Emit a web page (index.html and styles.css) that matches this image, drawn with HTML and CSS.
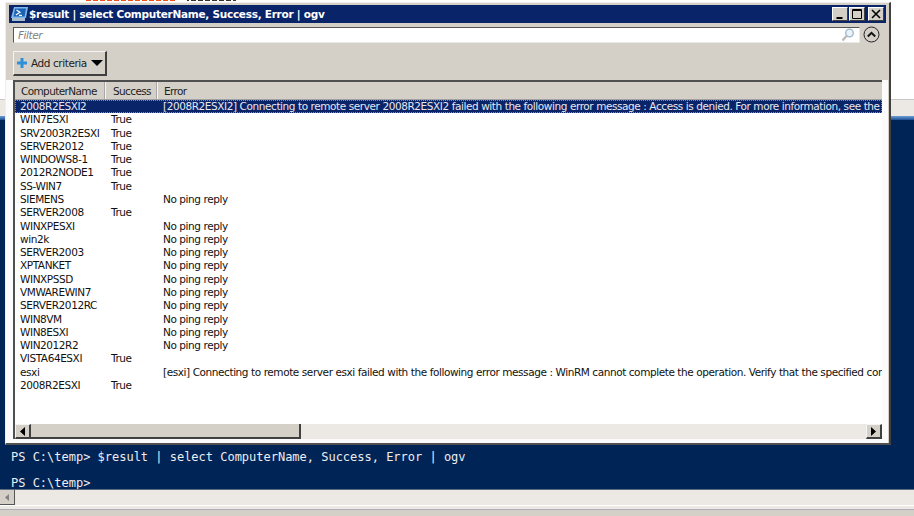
FILE: index.html
```html
<!DOCTYPE html>
<html lang="en">
<head>
<meta charset="utf-8">
<title>$result | select ComputerName, Success, Error | ogv</title>
<link rel="stylesheet" href="styles.css">
</head>
<body>
<div class="backdrop">
  <div class="top-area"><div class="clipped-output"></div></div>
  <div class="task-strip"></div>
  <div class="task-gradient"></div>
  <div class="console">
    <div class="console-line">PS C:\temp&gt; $result | select ComputerName, Success, Error | ogv</div>
    <div class="console-blank"></div>
    <div class="console-line">PS C:\temp&gt;</div>
  </div>
  <div class="console-scroll">
    <div class="console-scroll-btn"><svg width="5" height="7" viewBox="0 0 5 7"><path d="M4 0v7L0 3.5z" fill="#808080"/></svg></div>
  </div>
  <div class="bottom-line"></div>
  <div class="bottom-area"></div>
</div>

<div class="window">
  <div class="titlebar">
    <svg class="ps-icon" width="17" height="14" viewBox="0 0 17 14">
      <path d="M3 0h14l-2 11H0z" fill="#7db8ec"/>
      <path d="M4 1.500h11l-1.500 8H2.500z" fill="#1c62b4"/>
      <path d="M5.500 3l3.500 2.300L4.800 8M8 8.300h3" fill="none" stroke="#fff" stroke-width="1.200"/>
      <path d="M1 11h13v3H1z" fill="#a9bccf"/>
    </svg>
    <span class="title-text">$result | select ComputerName, Success, Error | ogv</span>
    <div class="title-buttons">
      <div class="tbtn"><svg width="14" height="12" viewBox="0 0 14 12"><path d="M3.500 9h6v2h-6z" fill="#000"/></svg></div>
      <div class="tbtn"><svg width="14" height="12" viewBox="0 0 14 12"><path d="M2.500 1.500h9v9h-9zM2.500 2.500h9" fill="none" stroke="#000"/></svg></div>
      <div class="tbtn tbtn-close"><svg width="14" height="12" viewBox="0 0 14 12"><path d="M3 2l8 8M11 2l-8 8" fill="none" stroke="#000" stroke-width="1.600"/></svg></div>
    </div>
  </div>

  <div class="filter-row">
    <div class="filter-input">
      <span class="filter-placeholder">Filter</span>
      <svg class="search-icon" width="14" height="14" viewBox="0 0 14 14">
        <circle cx="8.500" cy="5" r="3.800" fill="#eaf2fa" stroke="#9db4c8" stroke-width="1.300"/>
        <path d="M5.500 8L1.500 12.500" stroke="#b9b9b9" stroke-width="2.200"/>
      </svg>
    </div>
    <svg class="collapse-icon" width="17" height="17" viewBox="0 0 17 17">
      <circle cx="8.500" cy="8.500" r="7.500" fill="none" stroke="#222" stroke-width="1"/>
      <path d="M4.800 10.500l3.700-3.700 3.700 3.700" fill="none" stroke="#111" stroke-width="2"/>
    </svg>
  </div>

  <div class="criteria-row">
    <div class="criteria-btn">
      <svg width="10" height="10" viewBox="0 0 10 10"><path d="M3.500 0h3v3.500H10v3H6.500V10h-3V6.500H0v-3h3.500z" fill="#2f8fd8"/></svg>
      <span class="criteria-label">Add criteria</span>
      <svg width="12" height="6" viewBox="0 0 12 6"><path d="M0 0h12L6 6z" fill="#000"/></svg>
    </div>
  </div>

  <div class="list-frame">
    <div class="list">
      <div class="list-head">
        <div class="hcell hcell-name">ComputerName</div>
        <div class="hcell hcell-success">Success</div>
        <div class="hcell hcell-error">Error</div>
      </div>
      <div class="list-body">
        <div class="row row-selected"><span>2008R2ESXI2</span><span></span><span>[2008R2ESXI2] Connecting to remote server 2008R2ESXI2 failed with the following error message : Access is denied. For more information, see the about_Remote_Troubleshooting Help topic.</span></div>
        <div class="row"><span>WIN7ESXI</span><span>True</span><span></span></div>
        <div class="row"><span>SRV2003R2ESXI</span><span>True</span><span></span></div>
        <div class="row"><span>SERVER2012</span><span>True</span><span></span></div>
        <div class="row"><span>WINDOWS8-1</span><span>True</span><span></span></div>
        <div class="row"><span>2012R2NODE1</span><span>True</span><span></span></div>
        <div class="row"><span>SS-WIN7</span><span>True</span><span></span></div>
        <div class="row"><span>SIEMENS</span><span></span><span>No ping reply</span></div>
        <div class="row"><span>SERVER2008</span><span>True</span><span></span></div>
        <div class="row"><span>WINXPESXI</span><span></span><span>No ping reply</span></div>
        <div class="row"><span>win2k</span><span></span><span>No ping reply</span></div>
        <div class="row"><span>SERVER2003</span><span></span><span>No ping reply</span></div>
        <div class="row"><span>XPTANKET</span><span></span><span>No ping reply</span></div>
        <div class="row"><span>WINXPSSD</span><span></span><span>No ping reply</span></div>
        <div class="row"><span>VMWAREWIN7</span><span></span><span>No ping reply</span></div>
        <div class="row"><span>SERVER2012RC</span><span></span><span>No ping reply</span></div>
        <div class="row"><span>WIN8VM</span><span></span><span>No ping reply</span></div>
        <div class="row"><span>WIN8ESXI</span><span></span><span>No ping reply</span></div>
        <div class="row"><span>WIN2012R2</span><span></span><span>No ping reply</span></div>
        <div class="row"><span>VISTA64ESXI</span><span>True</span><span></span></div>
        <div class="row"><span>esxi</span><span></span><span>[esxi] Connecting to remote server esxi failed with the following error message : WinRM cannot complete the operation. Verify that the specified computer name is valid.</span></div>
        <div class="row"><span>2008R2ESXI</span><span>True</span><span></span></div>
      </div>
      <div class="hscroll">
        <div class="sb-btn"><svg width="5" height="9" viewBox="0 0 5 9"><path d="M5 0v9L0 4.500z" fill="#000"/></svg></div>
        <div class="sb-thumb"></div>
        <div class="sb-track"></div>
        <div class="sb-btn"><svg width="5" height="9" viewBox="0 0 5 9"><path d="M0 0v9l5-4.500z" fill="#000"/></svg></div>
      </div>
    </div>
  </div>
</div>
</body>
</html>
```
FILE: styles.css
```css
* { box-sizing: border-box; }
html, body { margin: 0; padding: 0; }
body {
  width: 914px;
  height: 516px;
  position: relative;
  overflow: hidden;
  background: #fff;
  font-family: "DejaVu Sans", sans-serif;
  font-size: 10.5px;
  letter-spacing: -.42px;
  color: #000;
}

.backdrop { display: flex; flex-direction: column; height: 516px; }
.top-area { height: 100px; background: #fff; border-bottom: 1px solid #c8c8c8; }
.clipped-output {
  margin-left: 86px;
  width: 150px;
  height: 1px;
  background:
    repeating-linear-gradient(90deg, transparent 0 5px, #fff 5px 7px),
    linear-gradient(90deg, #f0501e 0 91px, #fff 91px 101px, #333 101px 150px);
}
.task-strip { height: 16px; background: #ece9e4; }
.task-gradient { height: 4px; background: linear-gradient(#6f9fd8, #1d4f91); }
.console {
  height: 369px;
  background: #012456;
  color: #eeedf0;
  font-family: "DejaVu Sans Mono", monospace;
  font-size: 12px;
  letter-spacing: -.01px;
  line-height: 13px;
  padding: 331px 0 0 11px;
}
.console-blank { height: 13px; }
.console-line { white-space: pre; }
.console-scroll { height: 16px; background: #ece9e4; border-top: 1px solid #5a6a80; }
.console-scroll-btn {
  width: 15px;
  height: 15px;
  background: #d4d0c8;
  border-right: 1px solid #555;
  border-bottom: 1px solid #555;
  display: flex;
  align-items: center;
  justify-content: center;
}
.bottom-line { height: 5px; background: #ece9e4; border-top: 1px solid #fff; border-bottom: 1px solid #aeaeb8; }
.bottom-area { flex: 1; background: #d4d0c8; }

.window {
  position: absolute;
  left: 5px;
  top: 2px;
  width: 886px;
  height: 443px;
  background: #d4d0c8;
  border-style: solid;
  border-width: 1px 2px 2px 1px;
  border-color: #efefef #404040 #505050 #efefef;
  padding-top: 2px;
  display: flex;
  flex-direction: column;
}

.titlebar {
  height: 18px;
  margin: 0 3px;
  background: #0a246a;
  color: #fff;
  display: flex;
  align-items: center;
  padding: 0 2px;
  flex: none;
}
.ps-icon { flex: none; margin-right: 1px; }
.title-text { font-weight: bold; font-size: 10.5px; white-space: pre; letter-spacing: -.27px; }
.title-buttons { margin-left: auto; display: flex; gap: 1px; }
.tbtn {
  width: 16px;
  height: 14px;
  background: #d4d0c8;
  border-top: 1px solid #fff;
  border-left: 1px solid #fff;
  border-right: 1px solid #404040;
  border-bottom: 1px solid #404040;
  display: flex;
  align-items: center;
  justify-content: center;
}
.tbtn svg { flex: none; }
.tbtn-close { margin-left: 2px; }

.filter-row {
  display: flex;
  align-items: center;
  flex: none;
  height: 15px;
  margin: 4px 0 0 7px;
}
.filter-input {
  width: 847px;
  height: 16px;
  background: #fff;
  border-style: solid;
  border-width: 1px;
  border-color: #555 #e8e8e8 #e8e8e8 #555;
  display: flex;
  align-items: center;
  padding: 0 4px;
}
.filter-placeholder { font-style: italic; color: #808080; }
.search-icon { margin-left: auto; }
.collapse-icon { flex: none; margin-left: 3px; }

.criteria-row { flex: none; margin: 9px 0 0 7px; }
.criteria-btn {
  width: 94px;
  height: 25px;
  background: #d4d0c8;
  border-style: solid;
  border-width: 1px 2px 2px 1px;
  border-color: #f4f4f4 #404040 #404040 #f4f4f4;
  display: flex;
  align-items: center;
  padding-left: 3px;
  gap: 4px;
}
.criteria-label { color: #222; }

.list-frame {
  flex: 1;
  min-height: 0;
  margin: 4px 1px 0 0;
  padding: 0 6px 4px 7px;
  background: #fbfbfb;
  display: flex;
}
.list {
  flex: 1;
  min-width: 0;
  background: #fff;
  border-style: solid;
  border-width: 2px 0 0 2px;
  border-color: #505050;
  display: flex;
  flex-direction: column;
  overflow: hidden;
}
.list-head {
  flex: none;
  display: flex;
  height: 18px;
  background: #d4d0c8;
  border-bottom: 1px solid #a0a0a0;
}
.hcell {
  line-height: 18px;
  padding-left: 6px;
  border-right: 1px solid #f4f4f4;
  box-shadow: inset -1px 0 0 #a8a8a8;
  color: #222;
  white-space: nowrap;
  letter-spacing: -.62px;
}
.hcell-name { width: 91px; }
.hcell-success { width: 52px; padding-left: 7px; }
.hcell-error { flex: 1; border-right: 0; box-shadow: none; }

.list-body { flex: 1; min-height: 0; overflow: hidden; }
.row {
  display: grid;
  grid-template-columns: 91px 52px 1fr;
  height: 13.29px;
  line-height: 13px;
  padding-left: 5px;
  white-space: nowrap;
  color: #111;
}
.row-selected {
  background: #0a246a;
  color: #e8e8f0;
  outline: 1px dotted #8a8a8a;
  outline-offset: -1px;
}

.hscroll { flex: none; height: 15px; display: flex; background: #ece9e4; }
.sb-btn {
  flex: none;
  width: 16px;
  height: 15px;
  background: #d4d0c8;
  border-style: solid;
  border-width: 1px 2px 2px 1px;
  border-color: #f4f4f4 #404040 #404040 #f4f4f4;
  display: flex;
  align-items: center;
  justify-content: center;
}
.sb-thumb {
  flex: none;
  width: 270px;
  background: #d4d0c8;
  border-style: solid;
  border-width: 0 2px 2px 0;
  border-color: #404040;
}
.sb-track { flex: 1; }
```
